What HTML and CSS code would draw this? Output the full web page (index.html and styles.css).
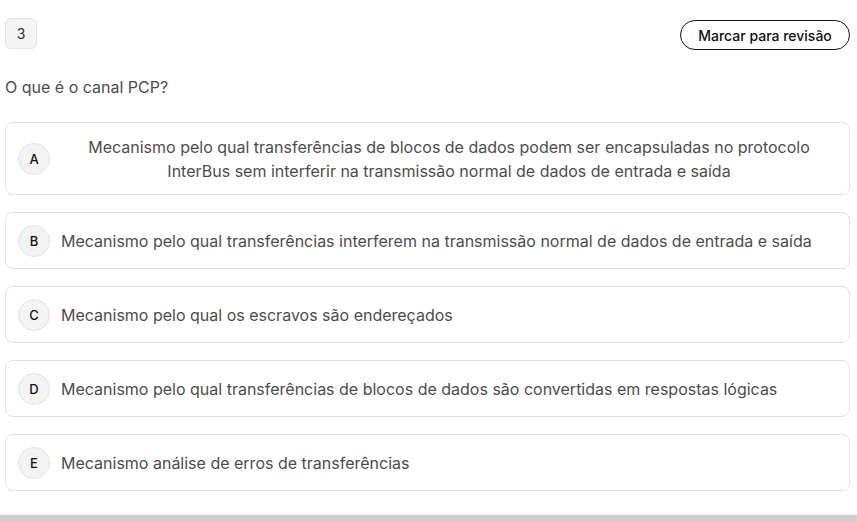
FILE: index.html
```html
<!DOCTYPE html>
<html lang="pt">
<head>
<meta charset="utf-8">
<link rel="stylesheet" href="styles.css">
</head>
<body>
<div class="page">
  <div class="top">
    <div class="num">3</div>
    <button class="mark">Marcar para revisão</button>
  </div>
  <p class="question">O que é o canal PCP?</p>
  <div class="options">
    <div class="opt"><span class="letter">A</span><span class="txt center">Mecanismo pelo qual transferências de blocos de dados podem ser encapsuladas no protocolo InterBus sem interferir na transmissão normal de dados de entrada e saída</span></div>
    <div class="opt"><span class="letter">B</span><span class="txt">Mecanismo pelo qual transferências interferem na transmissão normal de dados de entrada e saída</span></div>
    <div class="opt"><span class="letter">C</span><span class="txt">Mecanismo pelo qual os escravos são endereçados</span></div>
    <div class="opt"><span class="letter">D</span><span class="txt">Mecanismo pelo qual transferências de blocos de dados são convertidas em respostas lógicas</span></div>
    <div class="opt"><span class="letter">E</span><span class="txt">Mecanismo análise de erros de transferências</span></div>
  </div>
</div>
<div class="bottombar"></div>
</body>
</html>
```
FILE: styles.css
```css
html, body { margin: 0; padding: 0; background: #fff; }
body { font-family: Inter, "Noto Sans", sans-serif; color: #444; height: 521px; overflow: hidden; position: relative; }
.page { padding: 18px 7px 0 5px; }
.top { display: flex; justify-content: space-between; align-items: flex-start; }
.num {
  width: 32px; height: 31px; box-sizing: border-box;
  border: 1px solid #e4e4e4; border-radius: 6px; background: #f4f4f4;
  display: flex; align-items: center; justify-content: center;
  font-size: 14px; color: #333;
}
.mark {
  margin-top: 2px;
  height: 30px; width: 170px; box-sizing: border-box;
  border: 1.5px solid #111; border-radius: 15px; background: #fff;
  font-family: Inter, sans-serif; font-size: 14px; color: #111; font-weight: 500;
  padding: 0;
}
.question { margin: 26px 0 0 0; font-size: 16px; color: #4d4d4d; line-height: 22px; }
.options { display: flex; flex-direction: column; gap: 17px; margin-top: 24px; }
.opt {
  display: flex; align-items: center; gap: 11px;
  border: 1px solid #e2e2e2; border-radius: 8px;
  padding: 11px 12px; min-height: 57px; box-sizing: border-box;
}
.opt:first-child { min-height: 73px; }
.letter {
  flex: none; width: 32px; height: 32px; box-sizing: border-box;
  border-radius: 50%; background: #f3f3f3; border: 1px solid #e4e4e4;
  display: flex; align-items: center; justify-content: center;
  font-size: 13px; color: #111; font-weight: 500;
}
.txt { font-size: 16px; line-height: 24px; color: #4d4d4d; }
.txt.center { text-align: center; flex: 1; }
.bottombar { position: absolute; left: 0; right: 0; bottom: 0; height: 6px; background: #cfcfcf; box-shadow: 0 -1px 3px rgba(0,0,0,0.08); }
```
